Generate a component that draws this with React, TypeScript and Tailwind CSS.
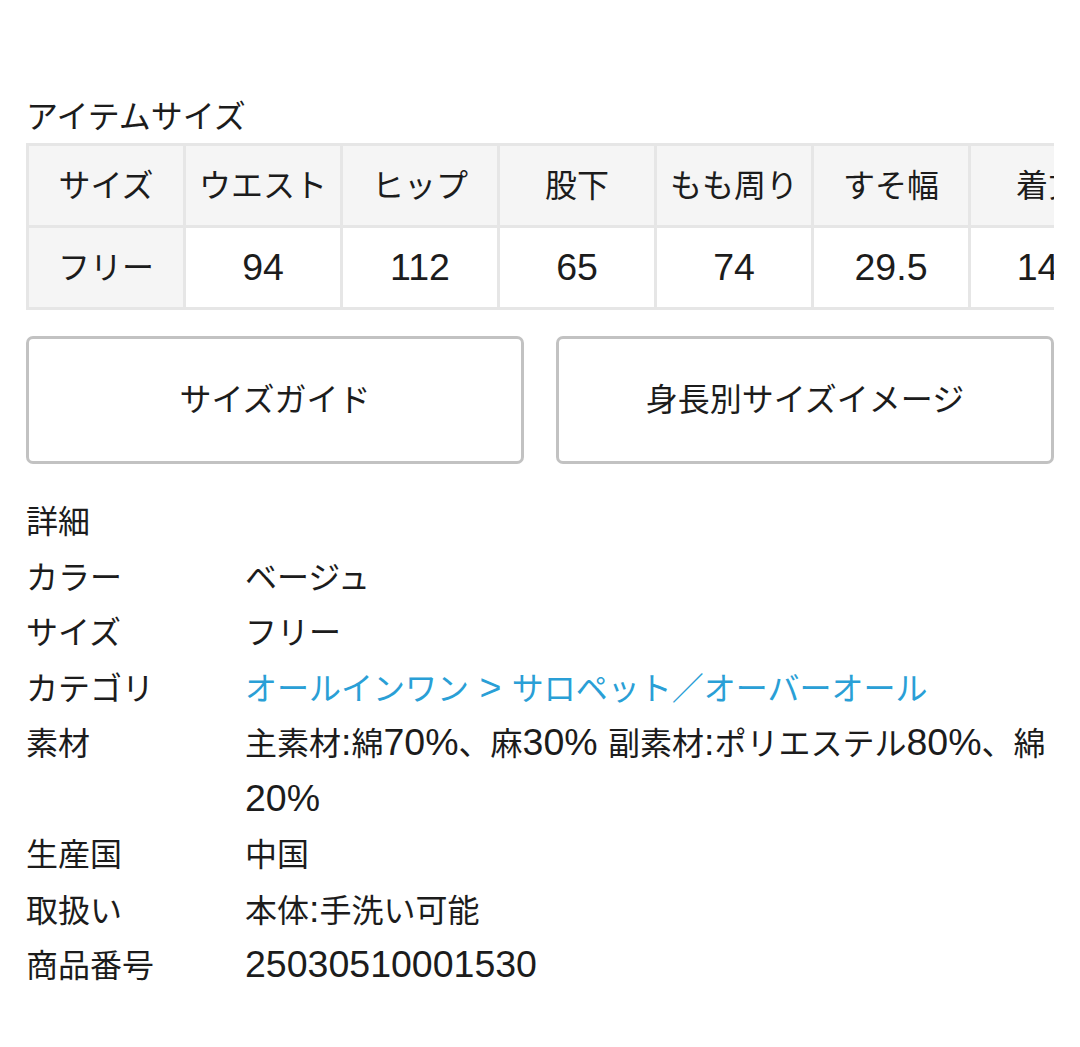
import React from 'react';

const headers = ['サイズ', 'ウエスト', 'ヒップ', '股下', 'もも周り', 'すそ幅', '着丈'];
const values = ['フリー', '94', '112', '65', '74', '29.5', '140'];

const details: { label: string; value: string; link?: boolean }[] = [
    { label: 'カラー', value: 'ベージュ' },
    { label: 'サイズ', value: 'フリー' },
    { label: 'カテゴリ', value: 'オールインワン > サロペット／オーバーオール', link: true },
    { label: '素材', value: '主素材:綿70%、麻30% 副素材:ポリエステル80%、綿20%' },
    { label: '生産国', value: '中国' },
    { label: '取扱い', value: '本体:手洗い可能' },
    { label: '商品番号', value: '25030510001530' },
];

// 英数字だけ少し大きく (元の画面のフォントに合わせる)
function Mixed({ text }: { text: string }) {
    return (
        <>
            {text.split(/([\x20-\x7E]+)/).map((part, i) =>
                /[\x20-\x7E]/.test(part) ? (
                    <span key={i} className="text-[37.5px] leading-none">{part}</span>
                ) : (
                    <React.Fragment key={i}>{part}</React.Fragment>
                )
            )}
        </>
    );
}

export default function App() {
    return (
        <div
            className="min-h-screen bg-white px-[26px] pt-[97px] text-[32px] text-[#1c1c1c]"
            style={{ fontFamily: '"Liberation Sans", "Noto Sans CJK JP", sans-serif' }}
        >
            {/* アイテムサイズ */}
            <h2 className="leading-[40px] mb-[6px]">アイテムサイズ</h2>

            <div className="w-full overflow-hidden">
                <div className="w-max border-t-[3px] border-l-[3px] border-[#e6e6e6]">
                    <div className="flex bg-[#f5f5f5]">
                        {headers.map((h) => (
                            <div key={h} className="w-[157px] h-[82px] shrink-0 flex items-center justify-center border-r-[3px] border-b-[3px] border-[#e6e6e6] leading-none">
                                {h}
                            </div>
                        ))}
                    </div>
                    <div className="flex">
                        {values.map((v, i) => (
                            <div
                                key={i}
                                className={`w-[157px] h-[82px] shrink-0 flex items-center justify-center border-r-[3px] border-b-[3px] border-[#e6e6e6] leading-none ${i === 0 ? 'bg-[#f5f5f5]' : 'bg-white'}`}
                            >
                                <Mixed text={v} />
                            </div>
                        ))}
                    </div>
                </div>
            </div>

            {/* ボタン */}
            <div className="flex gap-[32px] mt-[26px]">
                <button className="flex-1 h-[128px] border-[3px] border-[#c2c2c2] rounded-[7px] bg-white flex items-center justify-center">
                    サイズガイド
                </button>
                <button className="flex-1 h-[128px] border-[3px] border-[#c2c2c2] rounded-[7px] bg-white flex items-center justify-center">
                    身長別サイズイメージ
                </button>
            </div>

            {/* 詳細 */}
            <div className="mt-[31px] leading-[55.5px]">
                <div>詳細</div>
                {details.map((d) => (
                    <div key={d.label} className="flex">
                        <div className="w-[219px] shrink-0">{d.label}</div>
                        <div className={`flex-1 ${d.link ? 'text-[#2a9fd6]' : ''}`}>
                            <Mixed text={d.value} />
                        </div>
                    </div>
                ))}
            </div>
        </div>
    );
}
